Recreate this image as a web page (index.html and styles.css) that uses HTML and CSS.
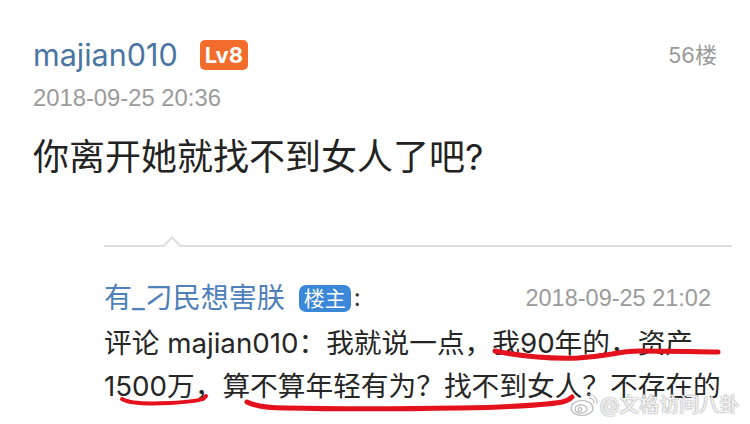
FILE: index.html
```html
<!DOCTYPE html>
<html lang="zh-CN">
<head>
<meta charset="utf-8">
<title>评论</title>
<link rel="stylesheet" href="styles.css">
</head>
<body>
<div class="page">
  <div class="post">
    <div class="head">
      <span class="user">majian010</span>
      <span class="lv">Lv8</span>
      <span class="floor">56楼</span>
    </div>
    <div class="time">2018-09-25 20:36</div>
    <div class="content">你离开她就找不到女人了吧?</div>
    <div class="reply">
      <div class="reply-head">
        <span class="rname">有_刁民想害朕</span>
        <span class="owner">楼主</span><span class="colon">:</span>
        <span class="rtime">2018-09-25 21:02</span>
      </div>
      <p class="rtext">评论 majian010：我就说一点，我90年的，资产1500万，算不算年轻有为？找不到女人？不存在的</p>
    </div>
  </div>

  <svg class="marks" width="750" height="424" viewBox="0 0 750 424">
    <g fill="none" stroke="#e3121c" stroke-linecap="round" stroke-linejoin="round">
      <path d="M495 351 C520 356 550 359 578 358 C595 357 605 355 612 354 C622 352 630 351 640 351 C670 351 700 352 718 352" stroke-width="5"/>
      <path d="M122 399 C130 404 150 404 170 403 C185 402 198 401 203 399 L206 396" stroke-width="4"/>
      <path d="M247 402 C255 406 265 408 285 408 C330 409 400 409 460 408 C510 407 545 405 562 402 C567 401 570 399 572 397" stroke-width="5"/>
    </g>
  </svg>

  <div class="watermark">
    <svg class="wb" width="28" height="24" viewBox="0 0 28 24">
      <g fill="rgba(255,255,255,0.85)" stroke="#b9b9b9" stroke-width="1.2">
        <ellipse cx="12" cy="15" rx="11" ry="7.5"/>
        <ellipse cx="11" cy="16" rx="6" ry="4.2"/>
        <circle cx="10" cy="16.5" r="1.8"/>
      </g>
      <g fill="none" stroke="#b9b9b9" stroke-width="1.2" stroke-linecap="round">
        <path d="M19 5 C22 5 24 7 24 10"/>
        <path d="M19 1.5 C24 1.5 27 5 27 10"/>
      </g>
    </svg>
    <span class="wm-text">@文格访问八卦</span>
  </div>
</div>
</body>
</html>
```

FILE: styles.css
```css
html, body {
  margin: 0;
  padding: 0;
  background: #ffffff;
}

.page {
  position: relative;
  width: 750px;
  height: 424px;
  overflow: hidden;
  font-family: Inter, "Noto Sans CJK SC", sans-serif;
  color: #222222;
}

.post {
  padding: 35px 33px 0 33px;
}

.head {
  display: flex;
  align-items: center;
  height: 40px;
  line-height: 40px;
}

.user {
  font-size: 30.5px;
  color: #4a75a2;
}

.lv {
  margin-left: 22px;
  background: #f26d2b;
  color: #ffffff;
  font-weight: 700;
  font-size: 22px;
  line-height: 30px;
  height: 30px;
  padding: 0 5px;
  border-radius: 5px;
}

.floor {
  margin-left: auto;
  font-size: 22px;
  color: #9a9a9a;
}

.time {
  margin-top: 9px;
  font-family: "Liberation Sans", "Noto Sans CJK SC", sans-serif;
  font-size: 23.8px;
  line-height: 28px;
  color: #9b9b9b;
}

.content {
  margin-top: 21px;
  font-size: 36px;
  line-height: 48px;
  color: #232323;
}

.reply {
  position: relative;
  margin: 64px -15px 0 71px;
  border-top: 2px solid #dedede;
  padding-top: 33px;
}

.reply::before {
  content: "";
  position: absolute;
  top: -8px;
  left: 61px;
  width: 12px;
  height: 12px;
  background: #ffffff;
  border-top: 2px solid #dedede;
  border-left: 2px solid #dedede;
  transform: rotate(45deg);
}

.reply-head {
  display: flex;
  align-items: center;
  height: 36px;
  line-height: 36px;
}

.rname {
  font-size: 28px;
  color: #4f80b9;
}

.owner {
  margin-left: 14px;
  background: #3b88d9;
  color: #ffffff;
  font-size: 21px;
  line-height: 27px;
  height: 27px;
  padding: 0 5px;
  border-radius: 7px;
}

.colon {
  margin-left: 3px;
  font-size: 24px;
  color: #333333;
}

.rtime {
  margin-left: auto;
  margin-right: 21px;
  font-family: "Liberation Sans", "Noto Sans CJK SC", sans-serif;
  font-size: 23.5px;
  color: #9b9b9b;
}

.rtext {
  margin: 6px 0 0 0;
  font-size: 27.7px;
  line-height: 43px;
  color: #262626;
}

.marks {
  position: absolute;
  left: 0;
  top: 0;
  pointer-events: none;
}

.watermark {
  position: absolute;
  left: 570px;
  top: 393px;
  display: flex;
  align-items: center;
  gap: 2px;
}

.wm-text {
  font-size: 20px;
  line-height: 20px;
  color: rgba(255, 255, 255, 0.92);
  text-shadow: 0 0 2px #9a9a9a, 0 0 1px #9a9a9a;
}
```
